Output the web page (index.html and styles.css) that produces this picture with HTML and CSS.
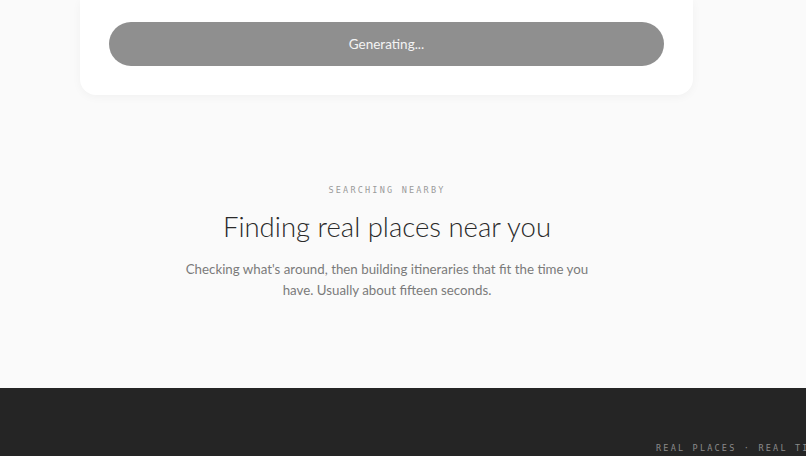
FILE: index.html
```html
<!DOCTYPE html>
<html>
<head>
<meta charset="utf-8">
<link rel="stylesheet" href="styles.css">
</head>
<body>
<div class="page">
  <div class="card">
    <button class="btn">Generating...</button>
  </div>
  <section class="status">
    <div class="eyebrow">SEARCHING NEARBY</div>
    <h1 class="title">Finding real places near you</h1>
    <p class="desc">Checking what's around, then building itineraries that fit the time you have. Usually about fifteen seconds.</p>
  </section>
</div>
<footer class="footer">
  <div class="ticker">REAL PLACES · REAL TIME · REAL PLACES · REAL TIME</div>
</footer>
</body>
</html>
```
FILE: styles.css
```css
html, body { margin: 0; padding: 0; }
body {
  background: #fafafa;
  font-family: Lato, "Noto Sans", sans-serif;
  width: 806px;
  height: 456px;
  overflow: hidden;
}
.page { width: 774px; }
.card {
  margin: 0 81px 0 80px;
  background: #fff;
  border-radius: 0 0 16px 16px;
  padding: 22px 29px 29px;
  box-shadow: 0 2px 10px rgba(0,0,0,0.04);
}
.btn {
  display: block;
  width: 100%;
  height: 44px;
  border: none;
  border-radius: 22px;
  background: #8f8f8f;
  color: #f4f4f4;
  font-family: Lato, "Noto Sans", sans-serif;
  font-size: 13.5px;
}
.status {
  text-align: center;
  padding-top: 89px;
  height: 293px;
  box-sizing: border-box;
}
.eyebrow {
  font-family: "DejaVu Sans Mono", monospace;
  font-size: 8.5px;
  letter-spacing: 2.2px;
  color: #9a9a9a;
  line-height: 12px;
}
.title {
  margin: 14px 0 0;
  font-size: 27.5px;
  font-weight: 300;
  color: #2a2a2a;
  line-height: 34px;
}
.desc {
  margin: 15px auto 0;
  width: 412px;
  font-size: 13.3px;
  line-height: 21px;
  color: #7a7a7a;
}
.footer {
  background: #252525;
  height: 68px;
  box-sizing: border-box;
  padding: 54px 0 0 656px;
  overflow: hidden;
  white-space: nowrap;
}
.ticker {
  font-family: "DejaVu Sans Mono", monospace;
  font-size: 8.5px;
  letter-spacing: 2.2px;
  color: #8a8a8a;
  line-height: 12px;
}
```
